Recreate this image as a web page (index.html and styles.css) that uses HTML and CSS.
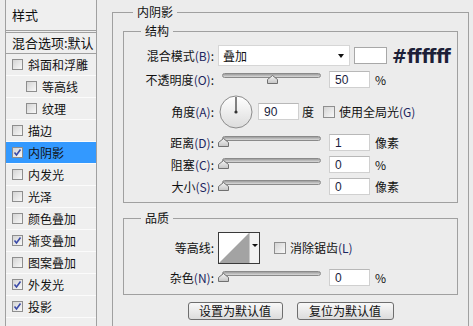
FILE: index.html
```html
<!DOCTYPE html>
<html lang="zh-CN">
<head>
  <meta charset="UTF-8">
  <title>图层样式 - 内阴影</title>
  <link rel="stylesheet" href="styles.css">
</head>
<body>
  <div class="sidebar">
    <div class="side-head">样式</div>
    <div class="side-blend">混合选项:默认</div>
    <div class="side-item"><span class="cb"></span>斜面和浮雕</div>
    <div class="side-item sub"><span class="cb"></span>等高线</div>
    <div class="side-item sub"><span class="cb"></span>纹理</div>
    <div class="side-item"><span class="cb"></span>描边</div>
    <div class="side-item active"><span class="cb on"></span>内阴影</div>
    <div class="side-item"><span class="cb"></span>内发光</div>
    <div class="side-item"><span class="cb"></span>光泽</div>
    <div class="side-item"><span class="cb"></span>颜色叠加</div>
    <div class="side-item"><span class="cb on"></span>渐变叠加</div>
    <div class="side-item"><span class="cb"></span>图案叠加</div>
    <div class="side-item"><span class="cb on"></span>外发光</div>
    <div class="side-item"><span class="cb on"></span>投影</div>
  </div>

  <fieldset class="panel">
    <legend>内阴影</legend>

    <fieldset class="group group-struct">
      <legend>结构</legend>

      <div class="row h23">
        <span class="lbl">混合模式<u>(B)</u>:</span>
        <div class="select">叠加<span class="arrow"></span></div>
        <span class="swatch"></span>
        <span class="hex">#ffffff</span>
      </div>

      <div class="row h25">
        <span class="lbl">不透明度<u>(O)</u>:</span>
        <div class="slider"><div class="track"></div><span class="thumb" style="left: 45px"></span></div>
        <span class="field">50</span>
        <span class="unit">%</span>
      </div>

      <div class="row h39">
        <span class="lbl">角度<u>(A)</u>:</span>
        <svg class="dial" width="34" height="34" viewBox="0 0 34 34">
          <defs>
            <linearGradient id="dialFill" x1="0" y1="0" x2="0" y2="1">
              <stop offset="0" stop-color="#ffffff"/>
              <stop offset="1" stop-color="#dcdcdc"/>
            </linearGradient>
          </defs>
          <circle cx="17" cy="17" r="16" fill="url(#dialFill)" stroke="#8c8c8c"/>
          <line x1="17" y1="17" x2="17" y2="2" stroke="#333" stroke-width="1.2"/>
          <circle cx="17" cy="17" r="1.6" fill="#333"/>
        </svg>
        <span class="field angle">90</span>
        <span class="unit deg">度</span>
        <span class="cb global"></span>
        <span class="opt">使用全局光<u>(G)</u></span>
      </div>

      <div class="row h22">
        <span class="lbl">距离<u>(D)</u>:</span>
        <div class="slider"><div class="track"></div><span class="thumb" style="left: -4px"></span></div>
        <span class="field">1</span>
        <span class="unit">像素</span>
      </div>

      <div class="row h22">
        <span class="lbl">阻塞<u>(C)</u>:</span>
        <div class="slider"><div class="track"></div><span class="thumb" style="left: -4px"></span></div>
        <span class="field">0</span>
        <span class="unit">%</span>
      </div>

      <div class="row h23">
        <span class="lbl">大小<u>(S)</u>:</span>
        <div class="slider"><div class="track"></div><span class="thumb" style="left: -4px"></span></div>
        <span class="field">0</span>
        <span class="unit">像素</span>
      </div>
    </fieldset>

    <fieldset class="group group-quality">
      <legend>品质</legend>

      <div class="row h35">
        <span class="lbl">等高线:</span>
        <svg class="contour" width="42" height="32" viewBox="0 0 42 32">
          <rect x="0.5" y="0.5" width="41" height="31" fill="#f2f2f2" stroke="#3a3a3a"/>
          <rect x="1" y="1" width="30" height="30" fill="#ffffff"/>
          <polygon points="1,31 31,1 31,31" fill="#a3a3a3"/>
          <line x1="31.5" y1="1" x2="31.5" y2="31" stroke="#c8c8c8"/>
          <polygon points="34,12 40,12 37,15" fill="#111"/>
        </svg>
        <span class="cb smooth"></span>
        <span class="opt">消除锯齿<u>(L)</u></span>
      </div>

      <div class="row h24">
        <span class="lbl">杂色<u>(N)</u>:</span>
        <div class="slider"><div class="track"></div><span class="thumb" style="left: -4px"></span></div>
        <span class="field">0</span>
        <span class="unit">%</span>
      </div>
    </fieldset>

    <div class="buttons">
      <button class="btn">设置为默认值</button>
      <button class="btn wide">复位为默认值</button>
    </div>
  </fieldset>
</body>
</html>
```

FILE: styles.css
```css
body {
  margin: 0;
  height: 326px;
  overflow: hidden;
  display: flex;
  align-items: flex-start;
  background: #ececec;
  font-family: "Noto Sans CJK SC", "Liberation Sans", sans-serif;
  font-size: 12px;
  color: #111;
}
u {
  text-decoration: none;
  color: #1c2660;
}

/* left style list */
.sidebar {
  margin-left: 5px;
  width: 90px;
  height: 326px;
  border-left: 1px solid #a0a0a0;
  border-right: 1px solid #a0a0a0;
  background: #efefef;
  flex-shrink: 0;
}
.side-head {
  height: 30px;
  line-height: 30px;
  padding-left: 6px;
  font-size: 13px;
  border-bottom: 3px double #a0a0a0;
}
.side-blend {
  height: 20px;
  line-height: 20px;
  padding-left: 6px;
  font-size: 13px;
  border-bottom: 1px solid #a0a0a0;
  white-space: nowrap;
  overflow: hidden;
}
.side-item {
  height: 21px;
  display: flex;
  align-items: center;
  padding-left: 6px;
  border-bottom: 1px solid #fbfbfb;
  white-space: nowrap;
}
.side-item.sub { padding-left: 20px; }
.side-item.active { background: #3399ff; }
.side-item .cb { margin-right: 5px; }

.cb {
  display: inline-block;
  box-sizing: border-box;
  width: 11px;
  height: 11px;
  border: 1px solid #8e8e8e;
  background: linear-gradient(135deg, #d4d4d4, #f8f8f8);
  flex-shrink: 0;
}
.cb.on {
  background: url("data:image/svg+xml,%3Csvg xmlns='http://www.w3.org/2000/svg' width='9' height='9'%3E%3Cpath d='M1.5 4.5 L3.5 7 L7.5 1.5' fill='none' stroke='%233a4aa8' stroke-width='1.6'/%3E%3C/svg%3E") center no-repeat, linear-gradient(135deg, #d4d4d4, #f8f8f8);
}

/* right panel */
fieldset {
  margin: 0;
  padding: 0;
  border: 1px solid #a0a0a0;
  min-width: 0;
}
legend {
  padding: 0 4px;
  line-height: 16px;
  font-size: 12px;
}
.panel {
  box-sizing: border-box;
  width: 357px;
  height: 322px;
  margin: 4px 0 0 15px;
  border-bottom: 0;
  flex-shrink: 0;
}
.panel > legend { margin-left: 20px; }
.group {
  margin: 3px 10px 0;
}
.group > legend { margin-left: 17px; }
.group-struct { padding: 5px 0 4px; }
.group-quality { margin-top: 7px; padding: 4px 0 5px; }

.row {
  display: flex;
  align-items: center;
  white-space: nowrap;
}
.h22 { height: 22px; }
.h23 { height: 23px; }
.h24 { height: 24px; }
.h25 { height: 25px; }
.h35 { height: 35px; }
.h39 { height: 39px; }

.lbl {
  box-sizing: border-box;
  width: 92px;
  padding-right: 2px;
  text-align: right;
  flex-shrink: 0;
}

.select {
  box-sizing: border-box;
  width: 132px;
  height: 21px;
  margin-left: 2px;
  padding-left: 4px;
  line-height: 19px;
  background: #fff;
  border: 1px solid #d6d6d6;
  position: relative;
}
.arrow {
  position: absolute;
  right: 5px;
  top: 8px;
  border-left: 3px solid transparent;
  border-right: 3px solid transparent;
  border-top: 4px solid #111;
}
.swatch {
  box-sizing: border-box;
  width: 33px;
  height: 17px;
  margin-left: 4px;
  background: #fff;
  border: 1px solid #a8a8a8;
}
.hex {
  margin-left: 5px;
  font-family: "DejaVu Sans Condensed", "DejaVu Sans", sans-serif;
  font-stretch: condensed;
  font-weight: bold;
  font-size: 20px;
  color: #1d1f38;
  line-height: 20px;
}

.slider {
  position: relative;
  width: 99px;
  height: 12px;
  margin-left: 6px;
  align-self: center;
  margin-top: -3px;
}
.track {
  box-sizing: border-box;
  height: 5px;
  margin-top: 1px;
  border: 1px solid #8a8a8a;
  border-radius: 3px;
  background: linear-gradient(#9c9c9c, #dadada);
}
.thumb {
  position: absolute;
  top: 3px;
  width: 11px;
  height: 9px;
  background: url("data:image/svg+xml,%3Csvg xmlns='http://www.w3.org/2000/svg' width='11' height='9'%3E%3Cdefs%3E%3ClinearGradient id='g' x1='0' y1='0' x2='0' y2='1'%3E%3Cstop offset='0' stop-color='%23f4f4f4'/%3E%3Cstop offset='1' stop-color='%23c4c4c4'/%3E%3C/linearGradient%3E%3C/defs%3E%3Cpath d='M0.5 8.5 V4.5 L5.5 0.5 L10.5 4.5 V8.5 Z' fill='url(%23g)' stroke='%23707070'/%3E%3C/svg%3E") no-repeat;
}

.field {
  box-sizing: border-box;
  width: 41px;
  height: 17px;
  margin-left: 8px;
  padding-left: 5px;
  line-height: 16px;
  background: #fff;
  border: 1px solid #d0d0d0;
  border-top-color: #b8b8b8;
  font-family: "Liberation Sans", sans-serif;
  color: #1a1d40;
}
.unit { margin-left: 5px; }
.unit.deg { margin-left: 3px; }

.dial { margin-left: 3px; flex-shrink: 0; }
.field.angle { margin-left: 5px; }
.cb.global { margin-left: 9px; width: 12px; height: 12px; }
.cb.smooth { margin-left: 14px; width: 12px; height: 12px; }
.opt { margin-left: 4px; }

.contour { margin-left: 2px; flex-shrink: 0; }

.buttons {
  display: flex;
  justify-content: center;
  gap: 14px;
  margin-top: 7px;
}
.btn {
  box-sizing: border-box;
  width: 95px;
  height: 18px;
  padding: 0;
  border: 1px solid #6e6e6e;
  border-radius: 3px;
  background: linear-gradient(#f8f8f8, #dcdcdc);
  font-family: "Noto Sans CJK SC", sans-serif;
  font-size: 12px;
  line-height: 16px;
  color: #111;
}
.btn.wide { width: 97px; }
```
